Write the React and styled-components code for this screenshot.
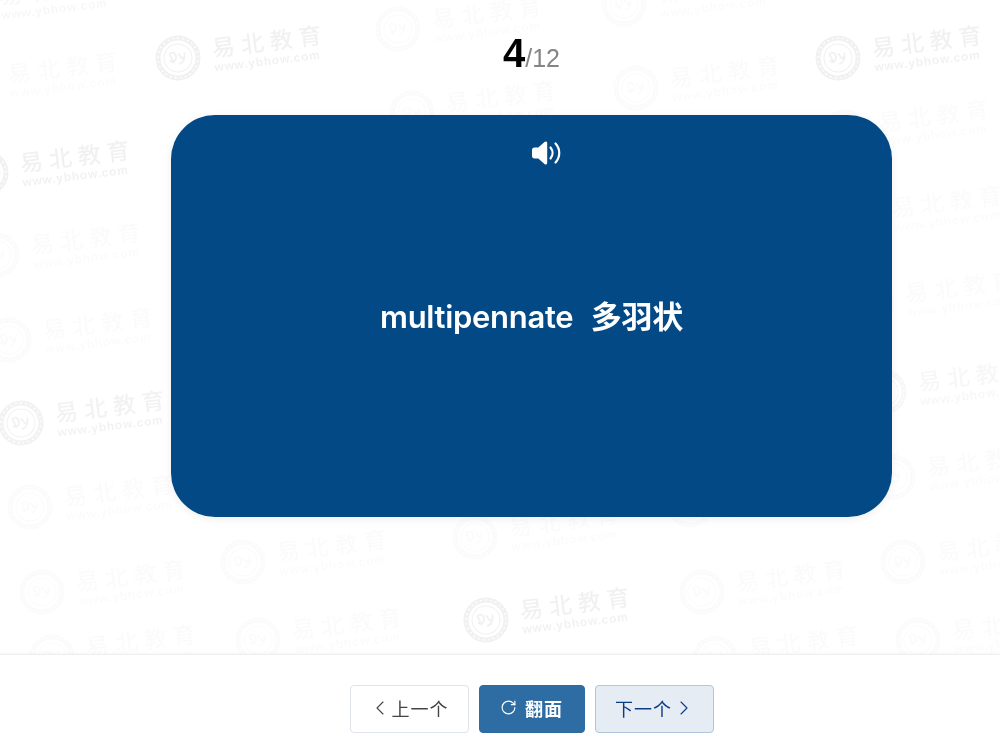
import React from "react";
import styled, { createGlobalStyle } from "styled-components";
import { ChevronLeft, ChevronRight, RotateCw } from "lucide-react";

const Global = createGlobalStyle`
  html, body { margin: 0; padding: 0; background: #fff; }
  body { font-family: Inter, "Liberation Sans", "Noto Sans CJK SC", sans-serif; }
`;

const Page = styled.div`
  position: relative;
  width: 1000px;
  height: 752px;
  overflow: hidden;
  display: flex;
  flex-direction: column;
  background: #fff;
`;

const WatermarkLayer = styled.div`
  position: absolute;
  inset: 0;
  pointer-events: none;
  filter: blur(0.7px);
`;

const Mark = styled.div`
  position: absolute;
  display: flex;
  align-items: center;
  gap: 12px;
  width: 180px;
  margin: -23px 0 0 -23px;
  transform: rotate(-7deg);
  transform-origin: 23px 23px;
  color: #000;
`;

const MarkText = styled.div`
  display: flex;
  flex-direction: column;
  font-family: "Liberation Sans", "Noto Sans CJK SC", sans-serif;
  white-space: nowrap;
`;

const MarkTitle = styled.span`
  font-family: "Noto Sans CJK SC", sans-serif;
  font-size: 23px;
  line-height: 27px;
  letter-spacing: 6px;
  font-weight: 500;
`;

const MarkUrl = styled.span`
  font-size: 12px;
  line-height: 14px;
  font-weight: 700;
  letter-spacing: 0.8px;
`;

const Main = styled.main`
  position: relative;
  flex: 1;
  display: flex;
  flex-direction: column;
  align-items: center;
  padding: 0 108px 0 171px;
`;

const Counter = styled.div`
  height: 115px;
  box-sizing: border-box;
  padding-top: 30px;
  font-family: "Liberation Sans", sans-serif;
  line-height: 46px;
  white-space: nowrap;
`;

const Current = styled.span`
  font-size: 40px;
  font-weight: 700;
  color: #000;
`;

const Total = styled.span`
  font-size: 25px;
  color: #858585;
`;

const Card = styled.section`
  position: relative;
  width: 721px;
  height: 402px;
  box-sizing: border-box;
  border-radius: 44px;
  background: #034985;
  box-shadow: 0 2px 8px rgba(0, 0, 0, 0.07);
  display: flex;
  align-items: center;
  justify-content: center;
  color: #fff;
`;

const Speaker = styled.button`
  position: absolute;
  top: 25px;
  left: 50%;
  margin-left: -1px;
  width: 32px;
  height: 26px;
  padding: 0;
  border: 0;
  background: none;
  color: #fff;
  display: flex;
`;

const Word = styled.div`
  font-family: Inter, "Noto Sans CJK SC", sans-serif;
  font-size: 31px;
  font-weight: 600;
  line-height: 40px;
  padding-top: 2px;
  letter-spacing: -0.3px;
  word-spacing: 10px;
  white-space: nowrap;
`;

const Footer = styled.footer`
  position: relative;
  height: 98px;
  box-sizing: border-box;
  background: #fff;
  border-top: 1px solid #efefef;
  box-shadow: 0 -1px 3px rgba(0, 0, 0, 0.04);
  padding: 30px 108px 0 171px;
  display: flex;
  justify-content: center;
  gap: 10px;
`;

const variants = {
  ghost: "background:#fff;border-color:#dfe3ea;color:#444;padding:0 2px 3px 0;",
  primary: "background:#2e6ca4;border-color:#2e6ca4;color:#fff;font-weight:700;padding:0 0 3px;",
  soft: "background:#e6ecf4;border-color:#aec6de;color:#0b3b85;padding:0 0 3px 3px;",
};

const Button = styled.button`
  width: ${(p) => p.$width}px;
  height: 48px;
  box-sizing: border-box;
  border: 1px solid;
  border-radius: 4px;
  display: flex;
  align-items: center;
  justify-content: center;
  gap: ${(p) => p.$gap}px;
  font-family: "Noto Sans CJK SC", sans-serif;
  font-size: 18px;
  letter-spacing: 1px;
  ${(p) => variants[p.$variant]}
`;

const MARKS = [
  [-35, 6, 0.032], [178, 58, 0.055], [398, 29, 0.017], [624, 4, 0.017], [838, 58, 0.055],
  [-26, 84, 0.017], [412, 113, 0.017], [636, 88, 0.017], [845, 132, 0.017],
  [-14, 173, 0.055], [-3, 255, 0.017], [9, 340, 0.016], [21, 423, 0.05],
  [30, 507, 0.016], [42, 592, 0.016], [243, 562, 0.017], [258, 640, 0.016],
  [52, 657, 0.017], [475, 537, 0.017], [486, 620, 0.055], [702, 592, 0.017],
  [690, 505, 0.017], [715, 658, 0.017], [903, 562, 0.016], [918, 640, 0.016],
  [893, 477, 0.016], [858, 218, 0.016], [871, 303, 0.016], [884, 392, 0.032],
];

function Logo() {
  return (
    <svg width="46" height="46" viewBox="0 0 46 46" style={{ flex: "none" }}>
      <circle cx="23" cy="23" r="20" fill="none" stroke="currentColor" strokeWidth="5" />
      <circle cx="23" cy="23" r="20" fill="none" stroke="#fff" strokeWidth="1.400" strokeDasharray="2 3" />
      <circle cx="23" cy="23" r="14" fill="#fff" stroke="currentColor" strokeWidth="1" />
      <path
        d="M15 18c4-3 7 1 6 5-1 3-4 4-6 2M15 18l3 9M24 19l3 5c2 0 3-3 3-5M30 19c0 5-2 9-6 10"
        fill="none"
        stroke="currentColor"
        strokeWidth="1.800"
        strokeLinecap="round"
      />
    </svg>
  );
}

function Watermark({ x, y, opacity }) {
  return (
    <Mark style={{ left: x, top: y, opacity }}>
      <Logo />
      <MarkText>
        <MarkTitle>易北教育</MarkTitle>
        <MarkUrl>www.ybhow.com</MarkUrl>
      </MarkText>
    </Mark>
  );
}

function SpeakerIcon() {
  return (
    <svg width="32" height="26" viewBox="0 0 32 26">
      <path
        d="M3.500 7.500h3.800L13.500 2c1.300-1.100 2.700-.5 2.700 1.200v19.600c0 1.700-1.400 2.300-2.700 1.200l-6.200-5.500H3.500C2 18.500 1 17.500 1 16v-6c0-1.500 1-2.500 2.500-2.500z"
        fill="currentColor"
      />
      <path d="M19.500 7.500c2.700 3.300 2.700 7.700 0 11" fill="none" stroke="currentColor" strokeWidth="2.200" strokeLinecap="round" />
      <path d="M24.500 3.500c5 5.500 5 13.500 0 19" fill="none" stroke="currentColor" strokeWidth="2.200" strokeLinecap="round" />
    </svg>
  );
}

export default function App() {
  return (
    <Page>
      <Global />
      <WatermarkLayer>
        {MARKS.map(([x, y, o]) => (
          <Watermark key={`${x}-${y}`} x={x} y={y} opacity={o} />
        ))}
      </WatermarkLayer>
      <Main>
        <Counter>
          <Current>4</Current>
          <Total>/12</Total>
        </Counter>
        <Card>
          <Speaker aria-label="播放">
            <SpeakerIcon />
          </Speaker>
          <Word>multipennate 多羽状</Word>
        </Card>
      </Main>
      <Footer>
        <Button $variant="ghost" $width={119} $gap={-7}>
          <ChevronLeft size={24} strokeWidth={1.100} />
          上一个
        </Button>
        <Button $variant="primary" $width={106} $gap={8}>
          <RotateCw size={17} strokeWidth={1.600} />
          翻面
        </Button>
        <Button $variant="soft" $width={119} $gap={-7}>
          下一个
          <ChevronRight size={24} strokeWidth={1.100} />
        </Button>
      </Footer>
    </Page>
  );
}
